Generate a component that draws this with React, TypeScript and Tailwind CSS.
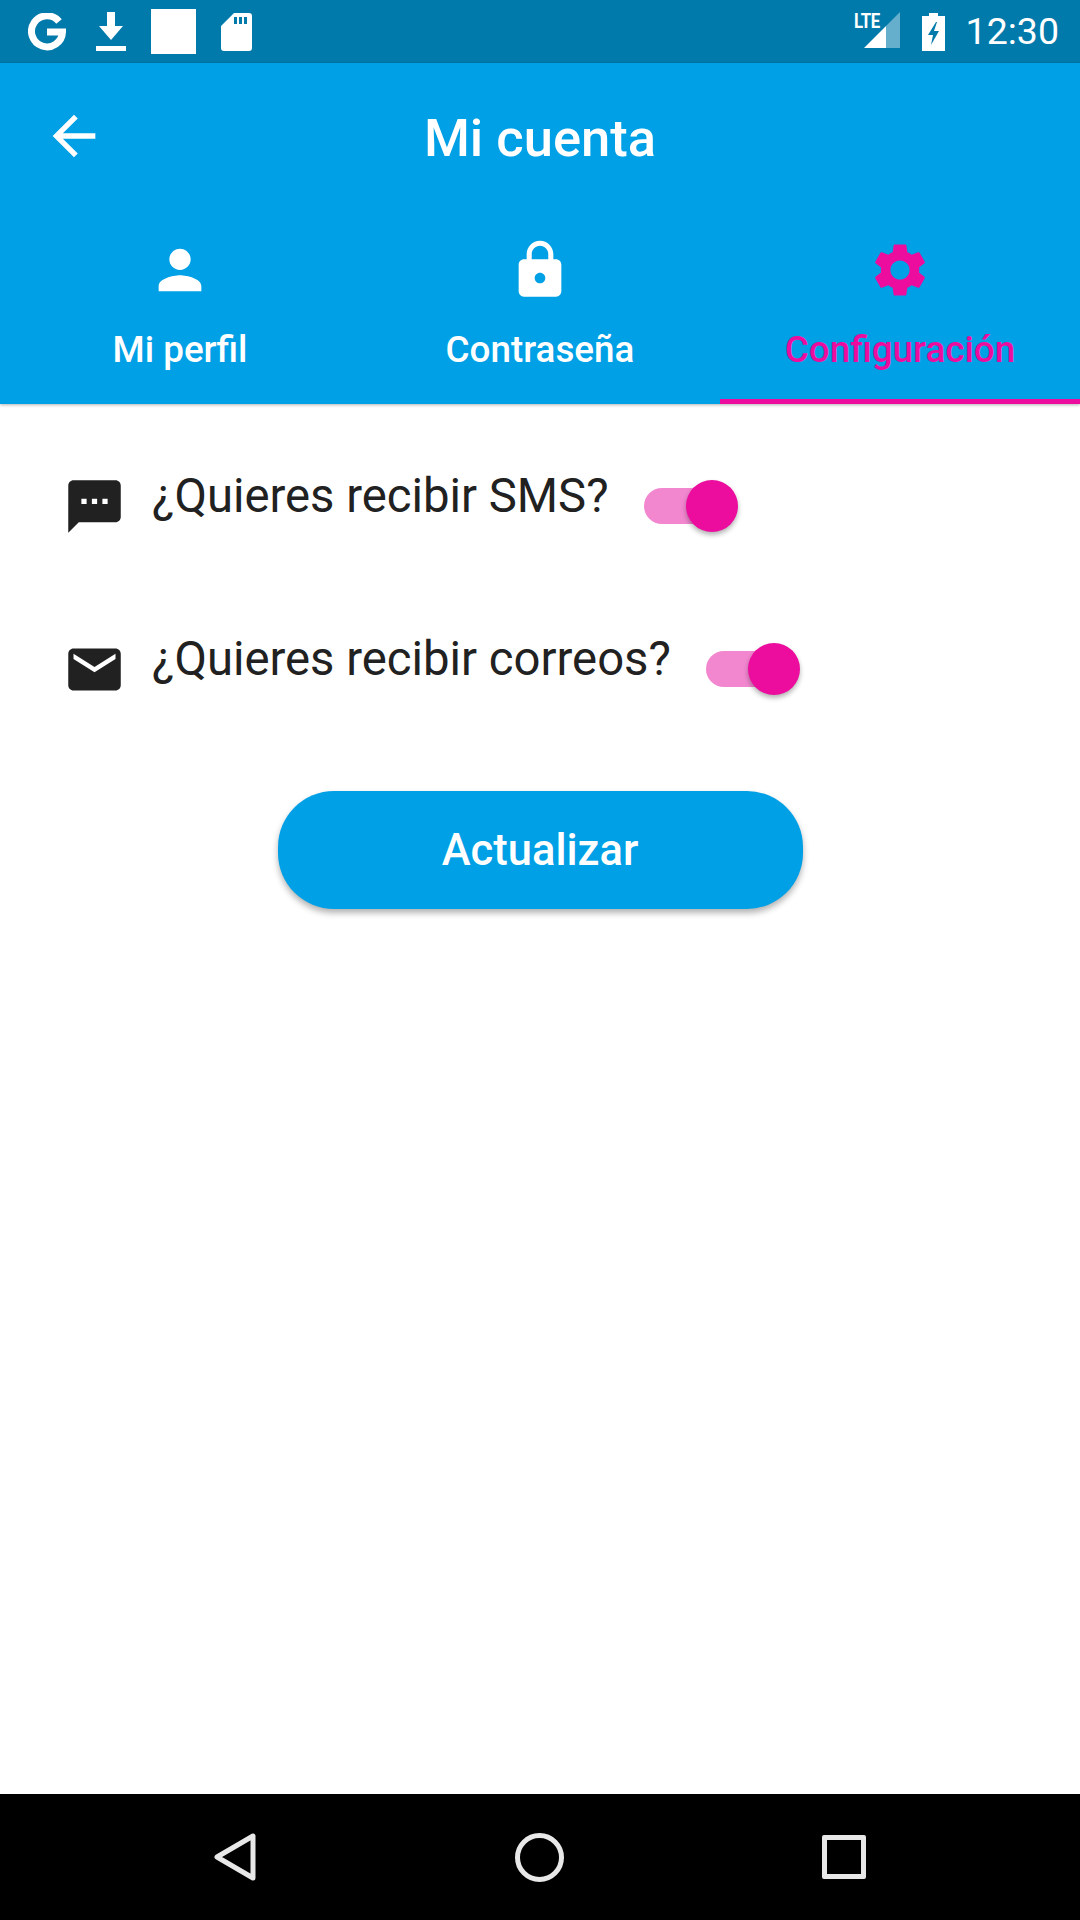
import React from 'react';

const PINK = 'text-[#ec0c9e]';

const Toggle = () => (
  <div className="relative h-[52px] w-[94px] shrink-0">
    <div className="absolute left-0 top-[8px] h-[36px] w-[82px] rounded-full bg-[#f287d0]" />
    <div className="absolute left-[42px] top-0 h-[52px] w-[52px] rounded-full bg-[#ec0c9e] shadow-[0_3px_5px_rgba(0,0,0,0.3)]" />
  </div>
);

const MdIcon = ({ d, className }: { d: string; className: string }) => (
  <svg viewBox="0 0 24 24" fill="currentColor" className={className}>
    <path d={d} />
  </svg>
);

const StatusBar = () => (
  <div className="flex h-[63px] items-center bg-[#007aab] text-white">
    <svg viewBox="0 0 38 38" className="ml-[28px] h-[38px] w-[38px]" fill="none" stroke="white" strokeWidth="7">
      <path d="M31 8.5A15.5 15.5 0 1 0 34.5 19H19" />
    </svg>
    <svg viewBox="0 0 30 40" className="ml-[30px] h-[40px] w-[30px]" fill="white">
      <path d="M11 0h8v14h8L15 28 3 14h8zM0 34h30v5H0z" />
    </svg>
    <div className="ml-[25px] h-[45px] w-[45px] bg-white" />
    <svg viewBox="0 0 31 38" className="ml-[25px] h-[38px] w-[31px]" fill="white">
      <path
        fillRule="evenodd"
        d="M13 0h15a3 3 0 0 1 3 3v32a3 3 0 0 1-3 3H3a3 3 0 0 1-3-3V13zM13 4v7h3V4zM18 4v7h3V4zM23 4v7h3V4z"
      />
    </svg>
    <div className="relative ml-auto h-[40px] w-[46px]">
      <svg viewBox="0 0 36 36" className="absolute left-[10px] top-[0px] h-[36px] w-[36px]">
        <path d="M36 0v36H22V14z" fill="white" fillOpacity="0.4" />
        <path d="M22 14v22H0z" fill="white" />
      </svg>
      <span className="absolute left-0 top-[-1px] origin-left scale-x-[0.8] text-[21px] font-bold leading-[20px] tracking-[-0.5px]">
        LTE
      </span>
    </div>
    <svg viewBox="0 0 23 38" className="ml-[22px] h-[38px] w-[23px]" fill="white">
      <path fillRule="evenodd" d="M7 0h9v3h7v35H0V3h7zM14 9 6 22h5l-2 10 8-14h-5l3-9z" />
    </svg>
    <span className="ml-[21px] mr-[21px] text-[37.5px] leading-none">12:30</span>
  </div>
);

const tabs = [
  {
    label: 'Mi perfil',
    color: 'text-white',
    d: 'M12 12c2.21 0 4-1.79 4-4s-1.79-4-4-4-4 1.79-4 4 1.79 4 4 4zm0 2c-2.67 0-8 1.34-8 4v2h16v-2c0-2.66-5.33-4-8-4z',
  },
  {
    label: 'Contraseña',
    color: 'text-white',
    d: 'M18 8h-1V6c0-2.76-2.24-5-5-5S7 3.24 7 6v2H6c-1.1 0-2 .9-2 2v10c0 1.1.9 2 2 2h12c1.1 0 2-.9 2-2V10c0-1.1-.9-2-2-2zm-6 9c-1.1 0-2-.9-2-2s.9-2 2-2 2 .9 2 2-.9 2-2 2zm3.1-9H8.9V6c0-1.71 1.39-3.1 3.1-3.1 1.71 0 3.1 1.39 3.1 3.1v2z',
  },
  {
    label: 'Configuración',
    color: PINK,
    active: true,
    d: 'M19.14 12.94c.04-.3.06-.61.06-.94 0-.32-.02-.64-.07-.94l2.03-1.58c.18-.14.23-.41.12-.61l-1.92-3.32c-.12-.22-.37-.29-.59-.22l-2.39.96c-.5-.38-1.03-.7-1.62-.94l-.36-2.54c-.04-.24-.24-.41-.48-.41h-3.84c-.24 0-.43.17-.47.41l-.36 2.54c-.59.24-1.13.57-1.62.94l-2.39-.96c-.22-.08-.47 0-.59.22L2.74 8.87c-.12.21-.08.47.12.61l2.03 1.58c-.05.3-.09.63-.09.94s.02.64.07.94l-2.03 1.58c-.18.14-.23.41-.12.61l1.92 3.32c.12.22.37.29.59.22l2.39-.96c.5.38 1.03.7 1.62.94l.36 2.54c.05.24.24.41.48.41h3.84c.24 0 .44-.17.47-.41l.36-2.54c.59-.24 1.13-.56 1.62-.94l2.39.96c.22.08.47 0 .59-.22l1.92-3.32c.12-.22.07-.47-.12-.61l-2.01-1.58zM12 15.6c-1.98 0-3.6-1.62-3.6-3.6s1.62-3.6 3.6-3.6 3.6 1.62 3.6 3.6-1.62 3.6-3.6 3.6z',
  },
];

const Header = () => (
  <div className="bg-[#00a0e6] text-white shadow-[0_1px_3px_rgba(0,0,0,0.3)]">
    <div className="relative flex h-[108px] items-center justify-center pt-[42px]">
      <MdIcon
        d="M20 11H7.83l5.59-5.59L12 4l-8 8 8 8 1.41-1.41L7.83 13H20v-2z"
        className="absolute left-[42px] top-[41px] h-[64px] w-[64px]"
      />
      <span className="text-[52.5px] font-medium leading-none">Mi cuenta</span>
    </div>
    <div className="grid h-[233px] grid-cols-3">
      {tabs.map((t) => (
        <div key={t.label} className={`flex flex-col items-center border-b-[5px] pt-[67px] ${t.color} ${t.active ? 'border-[#ec0c9e]' : 'border-transparent'}`}>
          <MdIcon d={t.d} className="h-[64px] w-[64px]" />
          <span className="mt-[26px] text-[36.8px] font-medium leading-[44px]">{t.label}</span>
        </div>
      ))}
    </div>
  </div>
);

const SettingRow = ({ d, label }: { d: string; label: string }) => (
  <div className="flex h-[63px] items-start">
    <MdIcon d={d} className="h-[63px] w-[63px] shrink-0 text-[#212121]" />
    <span className="ml-[26px] mt-[-11px] text-[47.25px] leading-[64px] text-[#212121]">{label}</span>
    <div className="ml-[35px] mt-[5px]">
      <Toggle />
    </div>
  </div>
);

const NavBar = () => (
  <div className="mt-auto flex h-[126px] items-center bg-black pl-[214px]">
    <svg viewBox="0 0 42 48" className="h-[48px] w-[42px]" fill="none" stroke="#e8e8e8" strokeWidth="5" strokeLinejoin="round">
      <path d="M39 3v42L3 24z" />
    </svg>
    <div className="ml-[259px] h-[49px] w-[49px] rounded-full border-[5px] border-[#e8e8e8]" />
    <div className="ml-[258px] h-[44px] w-[44px] rounded-[2px] border-[5px] border-[#e8e8e8]" />
  </div>
);

export default function App() {
  return (
    <div className="flex h-[1920px] w-[1080px] flex-col overflow-hidden bg-white font-['Roboto',sans-serif]">
      <StatusBar />
      <Header />
      <div className="flex flex-col pl-[63px] pt-[71px]">
        <SettingRow
          label="¿Quieres recibir SMS?"
          d="M20 2H4c-1.1 0-1.99.9-1.99 2L2 22l4-4h14c1.1 0 2-.9 2-2V4c0-1.1-.9-2-2-2zM9 11H7V9h2v2zm4 0h-2V9h2v2zm4 0h-2V9h2v2z"
        />
        <div className="h-[100px]" />
        <SettingRow
          label="¿Quieres recibir correos?"
          d="M20 4H4c-1.1 0-1.99.9-1.99 2L2 18c0 1.1.9 2 2 2h16c1.1 0 2-.9 2-2V6c0-1.1-.9-2-2-2zm0 4l-8 5-8-5V6l8 5 8-5v2z"
        />
      </div>
      <button className="mx-auto mt-[90px] h-[118px] w-[525px] rounded-[56px] bg-[#00a0e6] pt-[1px] text-[43.5px] font-medium text-white shadow-[0_4px_6px_rgba(0,0,0,0.3)]">
        Actualizar
      </button>
      <NavBar />
    </div>
  );
}
